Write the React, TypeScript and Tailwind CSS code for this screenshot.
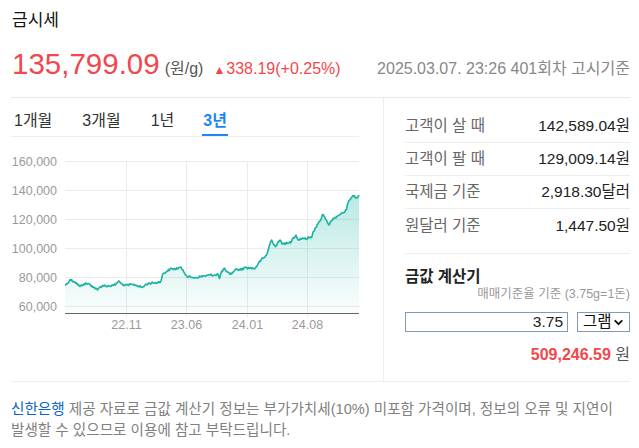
import React from "react";
import { ChevronDown } from "lucide-react";

const KP: [number, number][] = [[65,285],[67,284],[70,279.5],[75,282],[80,286.5],[84,284],[88,283.5],[92,286],[97.5,290],[100,287],[103,285.5],[108,286],[113,285.5],[116,284],[118.5,281],[121,283.5],[125,285.5],[129,285],[132,284.5],[137,285.5],[142.5,287.5],[145,285],[148,283.5],[153,283],[158,282.5],[161,281],[163,273.5],[166,272],[170,269],[175,269],[180,267.5],[183,270],[187,276.5],[192,277.5],[197,277.5],[201,276.5],[205,276],[210,275],[215,275],[218,274],[219.5,278.5],[221,273],[224,268.5],[227,272],[230,274.5],[233,272],[236.5,269],[240,270],[245,267.5],[250,268],[255,268.5],[258,264],[261,260],[265,257],[267,254],[269.5,245],[271.5,240],[274,245],[276,246],[278,242],[280,240],[282,244],[285,243],[288,243.5],[291.5,241.5],[293,238],[296,235],[298,240],[300,239],[303,238],[306,239],[309,237.5],[311.5,237.5],[313,232],[315,228.5],[318,224],[320,221],[322.5,214.5],[324,216],[326.5,220],[329,225],[331,221],[333,218.5],[336,218],[340,214.5],[343,213],[346.5,209.5],[348,203],[349.5,200],[351,198],[353,195.5],[355,197],[357,198],[359,195]];

function buildPoints(): [number, number][] {
  let seed = 12345;
  const rnd = () => {
    seed = (seed * 1103515245 + 12345) % 2147483648;
    return seed / 2147483648;
  };
  const pts: [number, number][] = [];
  for (let i = 0; i < KP.length - 1; i++) {
    const [x0, y0] = KP[i];
    const [x1, y1] = KP[i + 1];
    const steps = Math.max(1, Math.round((x1 - x0) / 0.8));
    for (let s = 0; s < steps; s++) {
      const t = s / steps;
      const x = x0 + (x1 - x0) * t;
      const y = y0 + (y1 - y0) * t + (s === 0 ? 0 : (rnd() - 0.5) * 2.2);
      pts.push([x, y]);
    }
  }
  pts.push(KP[KP.length - 1]);
  return pts;
}

const PTS = buildPoints();
const LINE = PTS.map(([x, y], i) => `${i === 0 ? "M" : "L"}${x.toFixed(2)} ${y.toFixed(2)}`).join(" ");
const AREA = `${LINE} L359 313 L65 313 Z`;

const yLabels: [string, number][] = [
  ["160,000", 161.5],
  ["140,000", 190.5],
  ["120,000", 219.5],
  ["100,000", 248.5],
  ["80,000", 277.5],
  ["60,000", 306.5],
];
const xLabels: [string, number][] = [
  ["22.11", 126.5],
  ["23.06", 186.5],
  ["24.01", 247.5],
  ["24.08", 307.5],
];

function Chart() {
  return (
    <svg width="372" height="200" viewBox="0 0 372 200" className="block">
      <defs>
        <linearGradient id="gfill" gradientUnits="userSpaceOnUse" x1="0" y1="195" x2="0" y2="313">
          <stop offset="0" stopColor="#1ab3a3" stopOpacity="0.3" />
          <stop offset="1" stopColor="#1ab3a3" stopOpacity="0.02" />
        </linearGradient>
      </defs>
      <g transform="translate(-11,-137)">
        {yLabels.map(([t, y]) => (
          <g key={t}>
            <line x1="65" x2="359" y1={y} y2={y} stroke="#ebebeb" strokeWidth="1" />
            <text x="57" y={y + 4.5} textAnchor="end" fontSize="12.5" fill="#9a9a9a" fontFamily="Liberation Sans, sans-serif">
              {t}
            </text>
          </g>
        ))}
        {xLabels.map(([t, x]) => (
          <g key={t}>
            <line x1={x} x2={x} y1="161" y2="317" stroke="#ebebeb" strokeWidth="1" />
            <text x={x} y="328.5" textAnchor="middle" fontSize="12.5" fill="#9a9a9a" fontFamily="Liberation Sans, sans-serif">
              {t}
            </text>
          </g>
        ))}
        <path d={AREA} fill="url(#gfill)" />
        <path d={LINE} fill="none" stroke="#19b2a2" strokeWidth="1.6" strokeLinejoin="round" />
        <line x1="65" x2="359" y1="313.5" y2="313.5" stroke="#666" strokeWidth="1" />
      </g>
    </svg>
  );
}

const rows: [string, string, string][] = [
  ["고객이 살 때", "142,589.04", "원"],
  ["고객이 팔 때", "129,009.14", "원"],
  ["국제금 기준", "2,918.30", "달러"],
  ["원달러 기준", "1,447.50", "원"],
];

export default function App() {
  return (
    <div className="w-[639px] h-[448px] bg-white overflow-hidden font-['Liberation_Sans','Noto_Sans_CJK_KR',sans-serif] text-[#222]">
      {/* header */}
      <div className="ml-[11px] mr-[9px] border-b border-[#e8e8e8] pb-[15px]">
        <div className="pl-[1px] pt-[9px] text-[17px] leading-[24px] text-[#111]">금시세</div>
        <div className="mt-[13px] pl-[1px] h-[36px] flex items-baseline">
          <span className="text-[29.5px] leading-[36px] text-[#f2474c]">135,799.09</span>
          <span className="ml-[5px] text-[16px] leading-[20px] text-[#555]">(원/g)</span>
          <span className="ml-[10px] text-[12px] leading-[20px] text-[#f2474c]">▲</span>
          <span className="ml-[1px] text-[16px] leading-[20px] text-[#f2474c]">338.19(+0.25%)</span>
          <span className="ml-auto text-[16px] leading-[20px] text-[#888]">2025.03.07. 23:26 401회차 고시기준</span>
        </div>
      </div>

      {/* main */}
      <div className="ml-[11px] mr-[9px] h-[284px] flex border-b border-[#eee]">
        <div className="w-[373px] border-r border-[#eee]">
          <div className="mr-[24px] flex border-b border-[#eee] pl-[3px] gap-[30px] text-[16px]">
            {["1개월", "3개월", "1년"].map((t) => (
              <div key={t} className="pt-[11px] pb-[1px] leading-[24px] border-b-2 border-transparent text-[#333]">
                {t}
              </div>
            ))}
            <div className="-ml-[2px] px-[1px] pt-[11px] pb-[1px] leading-[24px] border-b-2 border-[#1a87f5] text-[#1a87f5] font-bold">
              3년
            </div>
          </div>
          <Chart />
        </div>
        <div className="flex-1 pl-[21px]">
          <div className="pt-[12px]">
            {rows.map(([l, v, u], i) => (
              <div
                key={l}
                className={`h-[33px] flex items-center justify-between text-[15.5px] ${i < 3 ? "border-b border-[#eee]" : ""}`}
              >
                <span className="text-[#666]">{l}</span>
                <span className="text-[#222]">
                  {v}
                  {u}
                </span>
              </div>
            ))}
          </div>
          <div className="mt-[11px] border-t border-[#eee] pt-[13px]">
            <div className="text-[15.5px] leading-[20px] font-bold text-[#222]">금값 계산기</div>
            <div className="text-right text-[12.5px] leading-[14px] text-[#999]">매매기준율 기준 (3.75g=1돈)</div>
            <div className="mt-[11px] flex gap-[9px]">
              <input
                readOnly
                value="3.75"
                className="w-[163px] h-[20px] border border-[#7f9cb6] text-right pr-[4px] text-[15.5px] text-[#222] outline-none font-['Liberation_Sans',sans-serif]"
              />
              <div className="flex-1 h-[20px] border border-[#7f9cb6] flex items-center justify-between pl-[5px] pr-[4px] text-[15.5px] text-[#111]">
                <span>그램</span>
                <ChevronDown size={13} strokeWidth={3.5} color="#111" />
              </div>
            </div>
            <div className="mt-[13px] text-right text-[16px] leading-[20px]">
              <span className="font-bold text-[#f2474c]">509,246.59</span>
              <span className="text-[#555]"> 원</span>
            </div>
          </div>
        </div>
      </div>

      {/* footer */}
      <div className="ml-[11px] pt-[17px] text-[14.6px] leading-[21px] text-[#808080]">
        <div className="whitespace-nowrap">
          <span className="text-[#0a63c6]">신한은행</span> 제공 자료로 금값 계산기 정보는 부가가치세(10%) 미포함 가격이며, 정보의 오류 및 지연이
        </div>
        <div className="whitespace-nowrap">발생할 수 있으므로 이용에 참고 부탁드립니다.</div>
      </div>
    </div>
  );
}
